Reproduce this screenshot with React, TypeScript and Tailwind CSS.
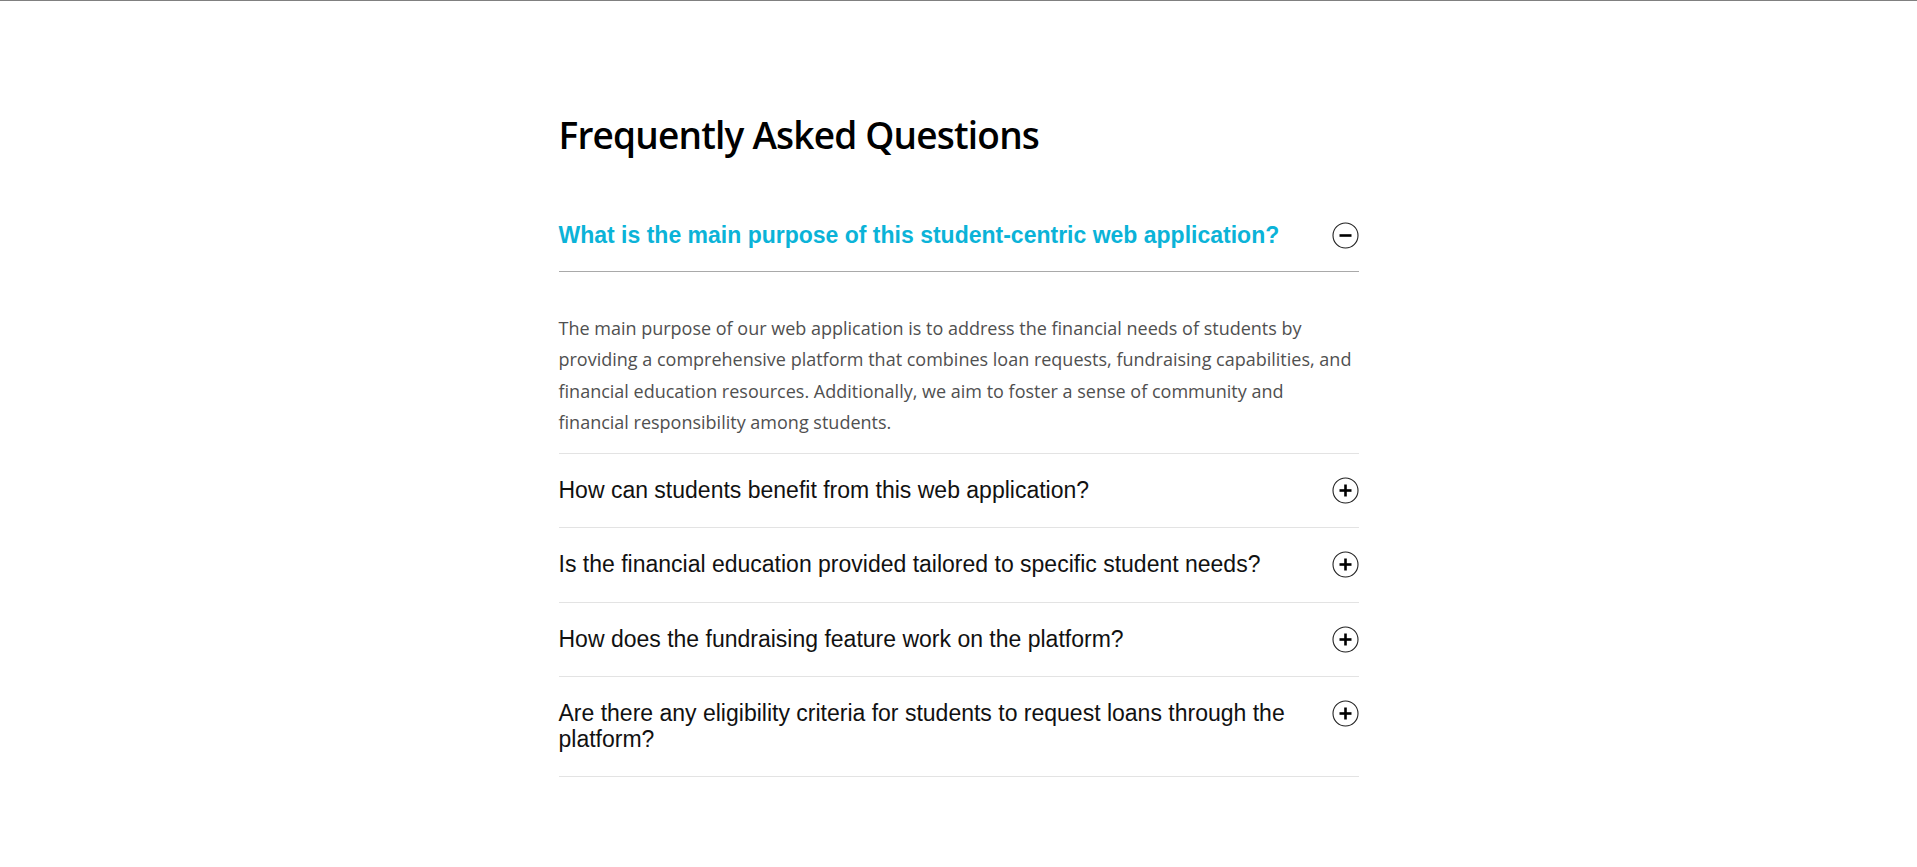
import React from "react";

const faqs = [
  {
    q: "What is the main purpose of this student-centric web application?",
    a: "The main purpose of our web application is to address the financial needs of students by providing a comprehensive platform that combines loan requests, fundraising capabilities, and financial education resources. Additionally, we aim to foster a sense of community and financial responsibility among students.",
    open: true,
  },
  { q: "How can students benefit from this web application?" },
  { q: "Is the financial education provided tailored to specific student needs?" },
  { q: "How does the fundraising feature work on the platform?" },
  { q: "Are there any eligibility criteria for students to request loans through the platform?" },
];

function ToggleIcon({ open }: { open?: boolean }) {
  return (
    <svg width="27" height="27" viewBox="0 0 27 27" className="shrink-0 -my-px">
      <circle cx="13.5" cy="13.5" r="12.5" fill="none" stroke="#222" strokeWidth="1.1" />
      <line x1="7.5" y1="13.5" x2="19.5" y2="13.5" stroke="#000" strokeWidth="2.6" />
      {!open && <line x1="13.5" y1="7.5" x2="13.5" y2="19.5" stroke="#000" strokeWidth="2.6" />}
    </svg>
  );
}

export default function App() {
  return (
    <div className="min-h-screen bg-white border-t border-[#808080]">
      <div className="w-[800px] mx-auto pt-[110px] pb-20">
        <h1
          className="text-[37px] leading-[48px] font-semibold text-black mb-10 tracking-[-0.8px]"
          style={{ fontFamily: '"Open Sans", "Noto Sans", sans-serif' }}
        >
          Frequently Asked Questions
        </h1>
        <div>
          {faqs.map((f, i) => (
            <div key={i} className="border-b border-[#e3e3e3]">
              <div
                className={
                  f.open
                    ? "flex items-start justify-between gap-6 pt-6 pb-[23px] border-b border-[#a9a9a9]"
                    : "flex items-start justify-between gap-6 py-6"
                }
              >
                <div
                  className={
                    f.open
                      ? "text-[23px] leading-[25px] font-bold text-[#0bb3d8]"
                      : "text-[23px] leading-[25.5px] text-[#111]"
                  }
                  style={{ fontFamily: '"Liberation Sans", Arial, sans-serif' }}
                >
                  {f.q}
                </div>
                <ToggleIcon open={f.open} />
              </div>
              {f.open && (
                <div className="pt-[41px] pb-[14px]">
                  <p
                    className="text-[18px] leading-[31.4px] font-normal text-[#505050]"
                    style={{ fontFamily: '"Open Sans", "Noto Sans", sans-serif' }}
                  >
                    {f.a}
                  </p>
                </div>
              )}
            </div>
          ))}
        </div>
      </div>
    </div>
  );
}
